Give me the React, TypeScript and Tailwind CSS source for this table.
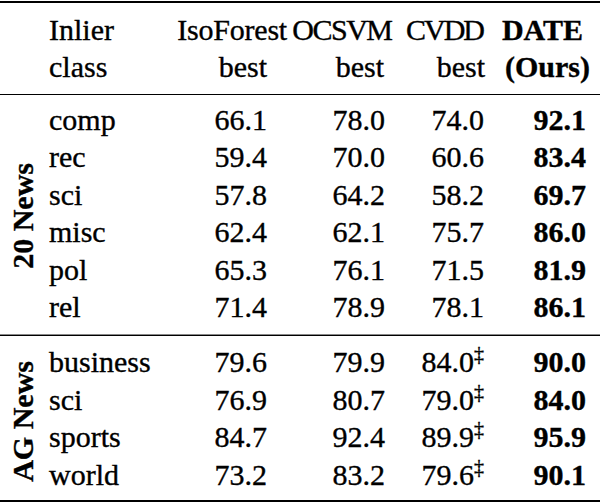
import React from 'react';

const news20 = [
  ['comp', '66.1', '78.0', '74.0', '92.1'],
  ['rec', '59.4', '70.0', '60.6', '83.4'],
  ['sci', '57.8', '64.2', '58.2', '69.7'],
  ['misc', '62.4', '62.1', '75.7', '86.0'],
  ['pol', '65.3', '76.1', '71.5', '81.9'],
  ['rel', '71.4', '78.9', '78.1', '86.1'],
];

const agNews = [
  ['business', '79.6', '79.9', '84.0', '90.0'],
  ['sci', '76.9', '80.7', '79.0', '84.0'],
  ['sports', '84.7', '92.4', '89.9', '95.9'],
  ['world', '73.2', '83.2', '79.6', '90.1'],
];

function Row({ r, dagger }: { r: string[]; dagger?: boolean }) {
  return (
    <div className="flex h-[37.4px] leading-[37.4px] whitespace-nowrap">
      <div className="w-[121px]">{r[0]}</div>
      <div className="w-[120px] pr-[23px] text-right">{r[1]}</div>
      <div className="w-[105px] pr-[10px] text-right">{r[2]}</div>
      <div className="w-[97px] pr-[8px] text-right">
        {r[3]}
        {dagger && <span className="text-[20px] leading-none align-super">‡</span>}
      </div>
      <div className="w-[108px] pr-[14px] text-right font-bold">{r[4]}</div>
    </div>
  );
}

function Section({ label, rows, dagger, pt, pb }: { label: string; rows: string[][]; dagger?: boolean; pt: string; pb: string }) {
  return (
    <div className={`flex ${pt} ${pb}`}>
      {/* rotated dataset name */}
      <div className="w-[49px] flex items-center pl-[8px]">
        <div className="[writing-mode:vertical-rl] rotate-180 font-bold leading-[30px] mt-[6px] whitespace-nowrap">
          {label}
        </div>
      </div>
      <div className="flex flex-col">
        {rows.map((r) => (
          <Row key={r[0]} r={r} dagger={dagger} />
        ))}
      </div>
    </div>
  );
}

export default function App() {
  return (
    <div className="w-[600px] h-[504px] bg-white text-black text-[30px] font-['Liberation_Serif','Times_New_Roman',serif] [-webkit-text-stroke:0.35px_#000] overflow-hidden">
      <div className="mt-[1px] h-[2px] bg-black" />

      {/* header */}
      <div className="pt-[8px] pb-[9px] whitespace-nowrap">
        <div className="flex h-[37px] leading-[37px]">
          <div className="w-[49px]" />
          <div className="w-[121px]">Inlier</div>
          <div className="w-[120px] pr-[3px] text-right tracking-[-0.2px]">IsoForest</div>
          <div className="w-[105px] pr-[3.5px] text-right tracking-[-1.5px]">OCSVM</div>
          <div className="w-[97px] pr-[9px] text-right tracking-[-2px]">CVDD</div>
          <div className="w-[108px] pr-[17px] text-right font-bold">DATE</div>
        </div>
        <div className="flex h-[37px] leading-[37px]">
          <div className="w-[49px]" />
          <div className="w-[121px]">class</div>
          <div className="w-[120px] pr-[23px] text-right">best</div>
          <div className="w-[105px] pr-[11px] text-right">best</div>
          <div className="w-[97px] pr-[7px] text-right">best</div>
          <div className="w-[108px] pr-[10px] text-right font-bold">(Ours)</div>
        </div>
      </div>
      <div className="h-px bg-black" />

      <Section label="20 News" rows={news20} pt="pt-[6px]" pb="pb-[9px]" />

      <div className="h-px bg-[#888]" />
      <div className="h-px bg-black" />

      <Section label="AG News" rows={agNews} dagger pt="pt-[7px]" pb="pb-[7px]" />

      <div className="h-[2px] bg-black" />
    </div>
  );
}
